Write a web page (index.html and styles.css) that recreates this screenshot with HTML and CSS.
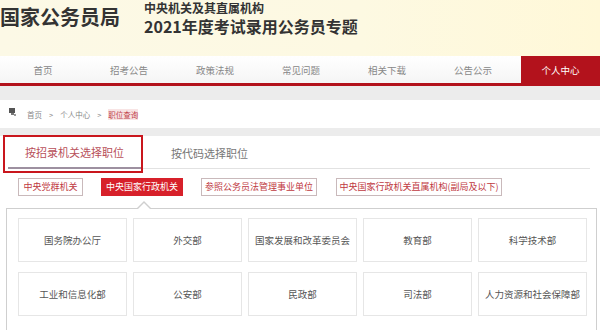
FILE: index.html
```html
<!DOCTYPE html>
<html lang="zh-CN">
<head>
    <meta charset="UTF-8">
    <title>2021年度考试录用公务员专题</title>
    <link rel="stylesheet" href="styles.css">
</head>
<body>
    <div class="header">
        <div class="logo">国家公务员局</div>
        <div class="subject">
            <div class="subject-small">中央机关及其直属机构</div>
            <div class="subject-big">2021年度考试录用公务员专题</div>
        </div>
    </div>

    <div class="nav">
        <a class="nav-item">首页</a>
        <a class="nav-item">招考公告</a>
        <a class="nav-item">政策法规</a>
        <a class="nav-item">常见问题</a>
        <a class="nav-item">相关下载</a>
        <a class="nav-item">公告公示</a>
        <a class="nav-item active">个人中心</a>
    </div>

    <div class="crumb-wrap">
        <div class="crumb">
            <svg class="crumb-icon" width="7" height="8" viewBox="0 0 7 8">
                <rect x="0" y="0" width="6" height="5" fill="#555"/>
                <rect x="2" y="5" width="3" height="2" fill="#777"/>
                <rect x="5" y="6" width="2" height="2" fill="#999"/>
            </svg>
            <span>首页</span>
            <span class="sep">&gt;</span>
            <span>个人中心</span>
            <span class="sep">&gt;</span>
            <span class="current">职位查询</span>
        </div>
    </div>

    <div class="main">
        <div class="tabs">
            <span class="tab active">按招录机关选择职位</span>
            <span class="tab">按代码选择职位</span>
        </div>
        <div class="mark"></div>

        <div class="filters">
            <span class="filter">中央党群机关</span>
            <span class="filter active">中央国家行政机关</span>
            <span class="filter">参照公务员法管理事业单位</span>
            <span class="filter">中央国家行政机关直属机构(副局及以下)</span>
        </div>

        <div class="panel">
            <div class="grid">
                <div class="card">国务院办公厅</div>
                <div class="card">外交部</div>
                <div class="card">国家发展和改革委员会</div>
                <div class="card">教育部</div>
                <div class="card">科学技术部</div>
                <div class="card">工业和信息化部</div>
                <div class="card">公安部</div>
                <div class="card">民政部</div>
                <div class="card">司法部</div>
                <div class="card">人力资源和社会保障部</div>
            </div>
        </div>
    </div>
</body>
</html>
```

FILE: styles.css
```css
body {
    margin: 0;
    background-color: #fff;
    font-family: "Noto Sans CJK SC", "Noto Sans", sans-serif;
    overflow: hidden;
}

.header {
    display: flex;
    align-items: flex-start;
    height: 56px;
    background: linear-gradient(90deg, #fcf9e6 0%, #fdf9e2 60%, #fff8d8 100%);
}

.logo {
    margin-top: 5px;
    font-size: 20px;
    line-height: 24px;
    font-weight: bold;
    color: #333;
}

.subject {
    margin-left: 24px;
    color: #333;
    font-weight: bold;
}

.subject-small {
    font-size: 12px;
    line-height: 13px;
    padding-top: 1px;
}

.subject-big {
    margin-top: 3px;
    font-size: 16px;
    line-height: 19px;
}

.nav {
    display: flex;
    height: 27px;
    border-bottom: 3px solid #b3121c;
    background: linear-gradient(#ffffff, #f5f5f5);
}

.nav-item {
    width: 86px;
    text-align: center;
    line-height: 29px;
    font-size: 9.5px;
    color: #888;
}

.nav-item.active {
    width: 79px;
    margin-left: auto;
    background-color: #b3121c;
    color: #fff;
}

.crumb-wrap {
    padding: 14px 0 8px;
    background-color: #ececec;
}

.crumb {
    display: flex;
    align-items: center;
    height: 28px;
    padding-left: 9px;
    background-color: #fff;
    font-size: 7.5px;
    color: #888;
}

.crumb-icon {
    margin-right: 11px;
    margin-top: -4px;
}

.sep {
    margin: 0 7px;
}

.current {
    color: #c0414a;
    background-color: #f8e4e4;
}

.main {
    position: relative;
}

.tabs {
    display: flex;
    align-items: flex-end;
    height: 32px;
    margin: 0 10px 0 8px;
    border-bottom: 1px solid #e2e2e2;
}

.tab {
    height: 30px;
    line-height: 30px;
    font-size: 11px;
    color: #777;
}

.tab.active {
    padding: 0 17px;
    margin-bottom: -1px;
    border-bottom: 2px solid #9d90a0;
    color: #b8505a;
}

.tab + .tab {
    margin-left: 30px;
}

.mark {
    position: absolute;
    left: 3px;
    top: -1px;
    width: 136px;
    height: 34px;
    border: 2px solid #c9161d;
}

.filters {
    display: flex;
    margin-top: 9px;
    padding-left: 18px;
    gap: 18px;
}

.filter {
    height: 16px;
    line-height: 16px;
    border: 1px solid #c9b9bb;
    text-align: center;
    font-size: 9px;
    color: #c0393f;
}

.filter:nth-child(1) { width: 63px; }
.filter:nth-child(2) { width: 80px; }
.filter:nth-child(3) { width: 114px; }
.filter:nth-child(4) { width: 164px; margin-left: 1px; }

.filter.active {
    background-color: #d7202a;
    border-color: #d7202a;
    color: #fff;
}

.panel {
    position: relative;
    margin: 12px 3px 0 6px;
    border: 1px solid #cfcfcf;
}

.panel::before,
.panel::after {
    content: "";
    position: absolute;
    left: 130px;
    border: 7px solid transparent;
    border-top: 0;
}

.panel::before {
    top: -8px;
    border-bottom: 7px solid #cfcfcf;
}

.panel::after {
    top: -6px;
    border-bottom: 7px solid #fff;
}

.grid {
    display: grid;
    grid-template-columns: repeat(5, 109px);
    column-gap: 6px;
    row-gap: 10px;
    padding: 9px 9px 20px 11px;
}

.card {
    height: 42px;
    line-height: 42px;
    border: 1px solid #e6e6e6;
    text-align: center;
    font-size: 9.5px;
    color: #555;
}
```
